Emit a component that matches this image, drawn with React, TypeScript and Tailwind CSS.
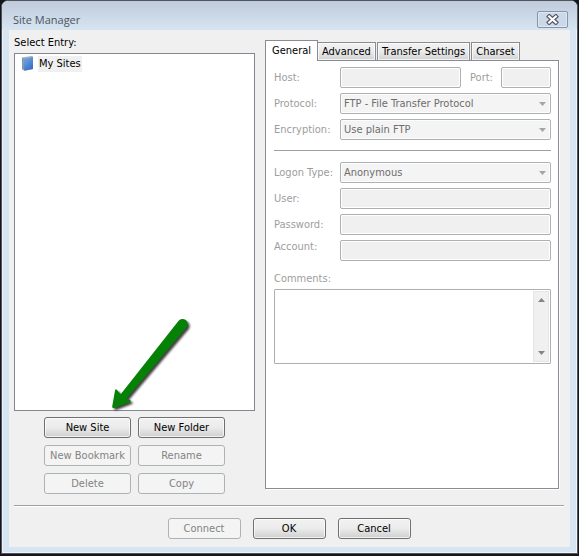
import type { ReactNode } from "react";
import clsx from "clsx";

const tabs = ["General", "Advanced", "Transfer Settings", "Charset"];

const entryActions = [
  { label: "New Site", disabled: false },
  { label: "New Folder", disabled: false },
  { label: "New Bookmark", disabled: true },
  { label: "Rename", disabled: true },
  { label: "Delete", disabled: true },
  { label: "Copy", disabled: true },
];

function PushButton({
  children,
  disabled,
  className,
}: {
  children: ReactNode;
  disabled?: boolean;
  className?: string;
}) {
  return (
    <button
      type="button"
      disabled={disabled}
      className={clsx(
        "flex h-[21px] items-center justify-center rounded-[3px] border whitespace-nowrap",
        disabled
          ? "border-[#adb2b5] bg-[#f4f4f4] text-[#838383]"
          : "border-[#707070] bg-linear-to-b from-[#f2f2f2] from-0% via-[#ebebeb] via-50% to-[#cfcfcf] text-black inset-ring inset-ring-white/70",
        className
      )}
    >
      {children}
    </button>
  );
}

function Field({
  id,
  label,
  type = "text",
}: {
  id: string;
  label: string;
  type?: string;
}) {
  return (
    <div className="flex items-center">
      <label htmlFor={id} className="w-[66px] shrink-0 whitespace-nowrap">
        {label}
      </label>
      <input
        id={id}
        type={type}
        disabled
        className="h-[21px] min-w-0 flex-1 rounded-[2px] border border-[#afafaf] bg-[#f0f0f0] px-1 inset-ring inset-ring-white"
      />
    </div>
  );
}

function SelectField({
  id,
  label,
  value,
}: {
  id: string;
  label: string;
  value: string;
}) {
  return (
    <div className="flex items-center">
      <label htmlFor={id} className="w-[66px] shrink-0 whitespace-nowrap">
        {label}
      </label>
      <div className="relative min-w-0 flex-1">
        <select
          id={id}
          disabled
          defaultValue={value}
          className="block h-[21px] w-full appearance-none rounded-[2px] border border-[#adb2b5] bg-[#f4f4f4] pr-5 pl-[3px] text-[#6d6d6d] opacity-100 inset-ring inset-ring-white/80"
        >
          <option>{value}</option>
        </select>
        <svg
          viewBox="0 0 7 4"
          className="pointer-events-none absolute top-[9px] right-[5px] h-[4px] w-[7px]"
        >
          <path d="M0 0h7L3.5 4z" fill="#a5a5a5" />
        </svg>
      </div>
    </div>
  );
}

function FolderIcon() {
  return (
    <svg viewBox="0 0 14 17" className="h-[17px] w-[14px]">
      <defs>
        <linearGradient id="cover" x1="0" y1="0" x2="0.6" y2="1">
          <stop offset="0" stopColor="#7fa9dc" />
          <stop offset="0.5" stopColor="#5b8fd6" />
          <stop offset="1" stopColor="#3a70c4" />
        </linearGradient>
      </defs>
      <path d="M1 2.500 10.500 1l1.500 1v12l-8.500 2L1 14z" fill="#9fb0bd" />
      <path d="M2.500 3.500 8 3.200 12 1.500V14l-8 1.500-1.500-1z" fill="url(#cover)" />
      <path d="M1 2.500l1.500 1V15L1 14z" fill="#7d97ae" />
    </svg>
  );
}

function Pointer() {
  return (
    <svg
      viewBox="0 0 100 110"
      className="pointer-events-none absolute bottom-[-10px] left-[85px] h-[110px] w-[100px]"
    >
      <path
        d="M78.600 10.700A5.200 5.200 0 0 1 86.700 17.200L26.700 88.300 30.200 90.300Q31.400 91.300 30 92L14 98.300Q12 98.600 12.200 96.500L15 80.500Q15.700 78.500 17 80L20.700 84.200Z"
        fill="#058205"
        className="drop-shadow-[2px_2px_1px_rgba(0,0,0,0.75)]"
      />
    </svg>
  );
}

export default function App() {
  return (
    <div className="flex min-h-screen flex-col bg-[#14161c] pr-px pb-0.5 pl-px font-['DejaVu_Sans_Condensed','DejaVu_Sans',sans-serif] text-[11px] leading-[14px] text-black">
      <div className="flex flex-1 flex-col rounded-t-[7px] border border-[#50545c] bg-[#d7e4f2] px-[7px] pb-[6px] inset-ring inset-ring-white/60">
        <header className="-mx-[7px] flex h-[29px] items-center justify-between rounded-t-[6px] bg-linear-to-b from-[#bfcbda] to-[#d7e4f2] pt-2 pr-[9px] pl-[11px]">
          <h1 className="font-['Open_Sans',sans-serif] text-[11px] leading-[16px] text-[#4b5560]">
            Site Manager
          </h1>
          <button
            type="button"
            aria-label="Close"
            className="flex h-[17px] w-[31px] items-center justify-center rounded-[2px] border border-[#8393ac] bg-[#cbd8e7] inset-ring inset-ring-white/40"
          >
            <svg viewBox="0 0 13 11" fill="none" className="h-[11px] w-[13px]">
              <path
                d="M3.200 2.500l6.600 6M9.800 2.500l-6.600 6"
                stroke="#535666"
                strokeWidth="4.400"
                strokeLinecap="square"
              />
              <path
                d="M3.200 2.500l6.600 6M9.800 2.500l-6.600 6"
                stroke="#fff"
                strokeWidth="2.200"
                strokeLinecap="square"
              />
            </svg>
          </button>
        </header>

        <main className="flex flex-1 flex-col bg-[#f0f0f0] pr-[6px] pb-2 pl-[5px]">
          <div className="flex flex-1 gap-[10px]">
            <section className="flex min-w-0 flex-[241] flex-col pt-[6px]">
              <h2 id="entries">Select Entry:</h2>
              <div className="relative mt-[3px] flex-1 border border-[#828790] bg-white">
                <ul aria-labelledby="entries" className="pt-px pl-[6px]">
                  <li className="flex items-center gap-[3px]">
                    <FolderIcon />
                    <span className="bg-[#f0f0f0] px-px py-px">My Sites</span>
                  </li>
                </ul>
                <Pointer />
              </div>
              <div className="mt-[6px] mb-[11px] grid grid-cols-[87px_87px] justify-center gap-x-[7px] gap-y-[7px]">
                {entryActions.map((action) => (
                  <PushButton key={action.label} disabled={action.disabled}>
                    {action.label}
                  </PushButton>
                ))}
              </div>
            </section>

            <section className="mr-[5px] mb-4 flex min-w-0 flex-[294] flex-col pt-[10px]">
              <div role="tablist" className="flex items-end">
                {tabs.map((tab, i) => (
                  <button
                    key={tab}
                    type="button"
                    role="tab"
                    aria-selected={i === 0}
                    className={clsx(
                      "border border-[#898c95] whitespace-nowrap",
                      i === 0
                        ? "relative -mb-px h-[21px] border-b-0 bg-white px-[6px]"
                        : "h-[18px] border-b-0 bg-linear-to-b from-[#f2f2f2] via-[#ebebeb] via-50% to-[#d2d2d2] px-[4px] inset-ring inset-ring-white/70",
                      i > 1 && "ml-px",
                      i === 1 && "border-l-0"
                    )}
                  >
                    {tab}
                  </button>
                ))}
              </div>
              <div
                role="tabpanel"
                className="flex-1 border border-[#898c95] bg-white pt-[6px] pr-[7px] pl-2 text-[#9d9d9d] shadow-[1px_1px_0_#fff]"
              >
                <div className="flex flex-col gap-[5px]">
                  <div className="flex items-center">
                    <div className="min-w-0 flex-1">
                      <Field id="host" label="Host:" />
                    </div>
                    <label htmlFor="port" className="ml-[9px] w-[31px]">
                      Port:
                    </label>
                    <input
                      id="port"
                      disabled
                      className="h-[21px] w-[50px] rounded-[2px] border border-[#afafaf] bg-[#f0f0f0] px-1 inset-ring inset-ring-white"
                    />
                  </div>
                  <SelectField
                    id="protocol"
                    label="Protocol:"
                    value="FTP - File Transfer Protocol"
                  />
                  <SelectField
                    id="encryption"
                    label="Encryption:"
                    value="Use plain FTP"
                  />
                </div>
                <hr className="mt-[10px] mb-[11px] border-[#a0a0a0]" />
                <div className="flex flex-col gap-[5px]">
                  <SelectField
                    id="logon"
                    label="Logon Type:"
                    value="Anonymous"
                  />
                  <Field id="user" label="User:" />
                  <Field id="password" label="Password:" type="password" />
                  <div className="flex items-start">
                    <label htmlFor="account" className="w-[66px] shrink-0">
                      Account:
                    </label>
                    <input
                      id="account"
                      disabled
                      className="h-[21px] min-w-0 flex-1 rounded-[2px] border border-[#afafaf] bg-[#f0f0f0] px-1 inset-ring inset-ring-white"
                    />
                  </div>
                </div>
                <label htmlFor="comments" className="mt-[11px] block">
                  Comments:
                </label>
                <div className="mt-[3px] flex h-[75px] rounded-[1px] border border-[#afafaf] p-px">
                  <textarea
                    id="comments"
                    disabled
                    className="min-w-0 flex-1 resize-none bg-white"
                  />
                  <div className="flex w-4 flex-col items-center justify-between border border-[#e6e6e6] bg-[#f0f0f0] py-[6px]">
                    <svg viewBox="0 0 7 4" className="h-[4px] w-[7px]">
                      <path d="M0 4h7L3.500 0z" fill="#858585" />
                    </svg>
                    <svg viewBox="0 0 7 4" className="h-[4px] w-[7px]">
                      <path d="M0 0h7L3.500 4z" fill="#858585" />
                    </svg>
                  </div>
                </div>
              </div>
            </section>
          </div>

          <hr className="border-[#a0a0a0] shadow-[0_1px_0_#fff]" />
          <footer className="mt-3 flex justify-center gap-3">
            <PushButton disabled className="w-[73px]">
              Connect
            </PushButton>
            <PushButton className="w-[73px]">OK</PushButton>
            <PushButton className="w-[73px]">Cancel</PushButton>
          </footer>
        </main>
      </div>
    </div>
  );
}
